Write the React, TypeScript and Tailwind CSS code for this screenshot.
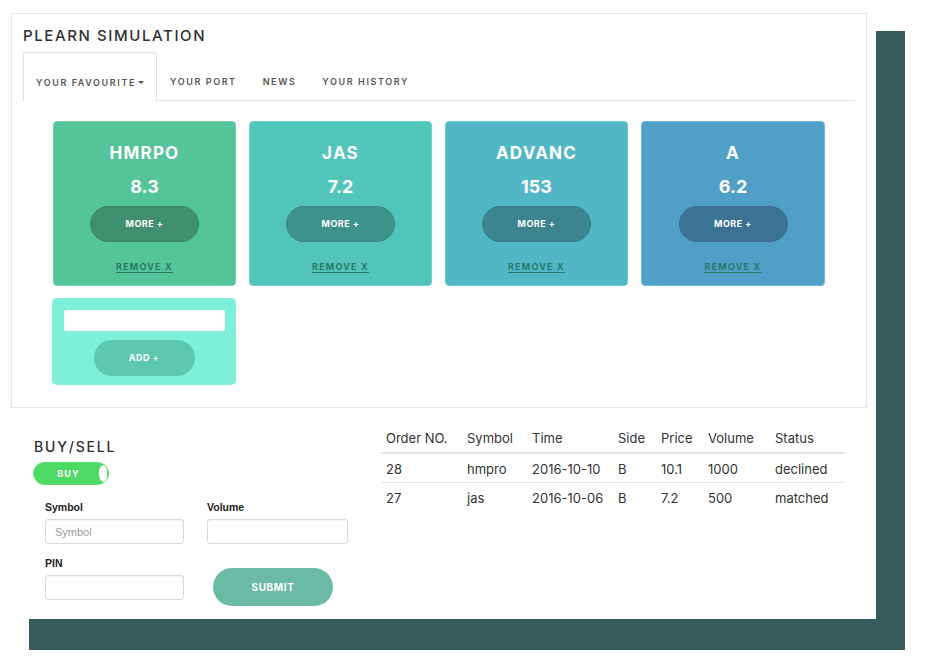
import React from "react";

const cards = [
  { sym: "HMRPO", val: "8.3", bg: "bg-[#54c59a]", border: "border-[#6fd3ae]", btn: "bg-[#3f8f70] border-[#3a8567]" },
  { sym: "JAS", val: "7.2", bg: "bg-[#51c5b9]", border: "border-[#6cd3c8]", btn: "bg-[#3d928a] border-[#38877f]" },
  { sym: "ADVANC", val: "153", bg: "bg-[#52b7c5]", border: "border-[#6ecad6]", btn: "bg-[#3c848f] border-[#377a85]" },
  { sym: "A", val: "6.2", bg: "bg-[#4f9fc6]", border: "border-[#6ab7d8]", btn: "bg-[#3c7394] border-[#3b6a92]" },
];

const rows = [
  ["28", "hmpro", "2016-10-10", "B", "10.1", "1000", "declined"],
  ["27", "jas", "2016-10-06", "B", "7.2", "500", "matched"],
];

export default function App() {
  const inter = { fontFamily: "Inter, 'Noto Sans', sans-serif" };
  return (
    <div className="w-[937px] h-[662px] bg-white" style={inter}>
      <div className="w-[876px] h-[619px] bg-white shadow-[29px_31px_0_0_#385c5c] pt-[13px] pl-[11px]">
        {/* Top panel */}
        <div className="w-[856px] h-[395px] border border-[#e6e6e6] bg-white">
          <div className="pl-[11px] pt-[13px]">
            <h1 className="text-[15px] leading-[18px] font-medium tracking-[1.6px] text-[#2f2f2f]">PLEARN SIMULATION</h1>
          </div>
          <div className="mx-[11px] mt-[7px] flex border-b border-[#e2e2e2] h-[49px]">
            <div className="-mb-px h-[50px] border border-b-white border-[#e2e2e2] rounded-t-[3px] bg-white px-[12px] pt-[24px] text-[9px] leading-[12px] font-semibold tracking-[1.6px] text-[#555] flex items-start">
              YOUR FAVOURITE
              <span className="ml-[2px] mt-[4px] inline-block w-0 h-0 border-l-[3px] border-r-[3px] border-t-[3px] border-l-transparent border-r-transparent border-t-[#555]"></span>
            </div>
            {["YOUR PORT", "NEWS", "YOUR HISTORY"].map((t) => (
              <div key={t} className="px-[13px] pt-[24px] text-[9px] leading-[12px] font-semibold tracking-[1.6px] text-[#555]">
                {t}
              </div>
            ))}
          </div>

          <div className="pl-[41px] mt-[20px] grid grid-cols-[183px_183px_183px_184px] gap-x-[13px] gap-y-[12px]">
            {cards.map((c) => (
              <div key={c.sym} className={`h-[165px] rounded-[4px] border ${c.bg} ${c.border} flex flex-col items-center pt-[21px]`}>
                <div className="text-[17px] leading-[20px] font-bold tracking-[1.2px] text-white">{c.sym}</div>
                <div className="mt-[13px] text-[18px] leading-[22px] font-bold text-white">{c.val}</div>
                <button className={`mt-[8px] w-[109px] h-[36px] rounded-full border ${c.btn} text-white text-[9px] font-bold tracking-[0.5px]`}>
                  MORE +
                </button>
                <div className="mt-[19px] text-[9px] leading-[12px] font-bold tracking-[1.2px] text-[#2b7766] underline underline-offset-[2px]">
                  REMOVE X
                </div>
              </div>
            ))}
            <div className="-ml-px h-[87px] w-[184px] rounded-[5px] bg-[#7ef0d9] flex flex-col items-center pt-[12px]">
              <input className="w-[161px] h-[21px] bg-white rounded-[2px] outline-none" />
              <button className="mt-[9px] w-[101px] h-[36px] rounded-full bg-[#5dc8ad] text-white text-[9px] font-bold tracking-[0.5px]">
                ADD +
              </button>
            </div>
          </div>
        </div>

        {/* Bottom section */}
        <div className="flex items-start">
          <div className="w-[337px] pl-[22px] pt-[30px]">
            <h2 className="text-[14px] leading-[17px] font-medium tracking-[1.8px] text-[#2f2f2f] ml-px">BUY/SELL</h2>
            <div className="mt-[7px] w-[76px] h-[23px] rounded-full bg-[#4cd964] border border-[#5ee074] flex items-center overflow-hidden">
              <span className="flex-1 text-center text-white text-[9px] font-bold tracking-[1.2px] pl-[4px]">BUY</span>
              <span className="w-[8px] h-[19px] bg-white rounded-l-full mr-[1px]"></span>
            </div>
            <div
              className="mt-[16px] pl-[12px] grid grid-cols-[139px_141px] gap-x-[23px]"
              style={{ fontFamily: "'Liberation Sans', Arial, sans-serif" }}
            >
              <div>
                <label className="block text-[10.5px] leading-[13px] font-bold text-[#222]">Symbol</label>
                <input
                  placeholder="Symbol"
                  className="mt-[5px] w-[139px] h-[25px] border border-[#d9d9d9] rounded-[3px] px-[9px] text-[11px] text-[#555] placeholder:text-[#9a9a9a] outline-none shadow-[inset_0_1px_1px_rgba(0,0,0,0.05)]"
                />
              </div>
              <div>
                <label className="block text-[10.5px] leading-[13px] font-bold text-[#222]">Volume</label>
                <input className="mt-[5px] w-[141px] h-[25px] border border-[#d9d9d9] rounded-[3px] outline-none shadow-[inset_0_1px_1px_rgba(0,0,0,0.05)]" />
              </div>
              <div className="mt-[13px]">
                <label className="block text-[10.5px] leading-[13px] font-bold text-[#222]">PIN</label>
                <input className="mt-[5px] w-[139px] h-[25px] border border-[#d9d9d9] rounded-[3px] outline-none shadow-[inset_0_1px_1px_rgba(0,0,0,0.05)]" />
              </div>
              <div className="mt-[24px] pl-[6px]">
                <button
                  className="w-[120px] h-[38px] rounded-full bg-[#6bbba4] text-white text-[10px] font-bold tracking-[0.6px]"
                  style={inter}
                >
                  SUBMIT
                </button>
              </div>
            </div>
          </div>

          <div className="ml-[33px] mt-[16px] w-[464px]">
            <table className="w-[464px] table-fixed border-collapse text-[13px] text-[#333]">
              <colgroup>
                <col className="w-[81px]" />
                <col className="w-[65px]" />
                <col className="w-[86px]" />
                <col className="w-[43px]" />
                <col className="w-[47px]" />
                <col className="w-[67px]" />
                <col />
              </colgroup>
              <thead>
                <tr className="border-b-2 border-[#e3e3e3]">
                  {["Order NO.", "Symbol", "Time", "Side", "Price", "Volume", "Status"].map((h) => (
                    <th key={h} className="text-left font-normal leading-[16px] pt-[6px] pb-[6px] pl-[5px] whitespace-nowrap">
                      {h}
                    </th>
                  ))}
                </tr>
              </thead>
              <tbody>
                {rows.map((r, i) => (
                  <tr key={i} className={i === 0 ? "border-b border-[#e6e6e6]" : ""}>
                    {r.map((v, j) => (
                      <td key={j} className="leading-[16px] pt-[7px] pb-[5px] pl-[5px] whitespace-nowrap">
                        {v}
                      </td>
                    ))}
                  </tr>
                ))}
              </tbody>
            </table>
          </div>
        </div>
      </div>
    </div>
  );
}
